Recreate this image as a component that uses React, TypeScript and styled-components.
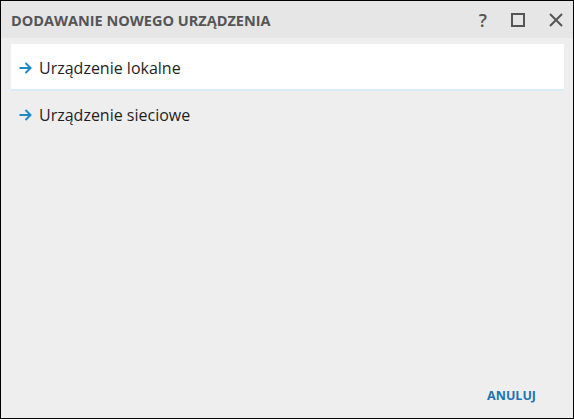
import React, { useState } from "react";
import styled, { createGlobalStyle } from "styled-components";

const Global = createGlobalStyle`
  html, body { margin: 0; padding: 0; }
  body { font-family: "Open Sans", "Noto Sans", Arial, sans-serif; background: #eeeeee; }
  * { box-sizing: border-box; }
`;

const Dialog = styled.div`
  width: 574px;
  height: 419px;
  border: 1px solid #000;
  background: #eeeeee;
  display: flex;
  flex-direction: column;
`;

const TitleBar = styled.div`
  height: 37px;
  flex: none;
  background: #e6e6e6;
  display: flex;
  align-items: center;
  padding: 0 10px 0 10px;
`;

const Title = styled.div`
  flex: 1;
  font-size: 14.5px;
  font-weight: 700;
  color: #555555;
  padding-top: 1px;
`;

const TitleButtons = styled.div`
  display: flex;
  align-items: center;
  gap: 24px;
`;

const IconButton = styled.button`
  height: 37px;
  border: none;
  background: transparent;
  padding: 0;
  display: flex;
  align-items: center;
  justify-content: center;
  color: #555555;
  font-family: "Open Sans", Arial, sans-serif;
  font-size: 18px;
  font-weight: 600;
  cursor: pointer;
`;

const Body = styled.div`
  flex: 1;
  padding: 6px 9px 0 10px;
  display: flex;
  flex-direction: column;
`;

const Item = styled.div<{ $active?: boolean }>`
  height: 47px;
  display: flex;
  align-items: center;
  padding: 3px 0 0 8px;
  gap: 7px;
  background: ${(p) => (p.$active ? "#ffffff" : "transparent")};
  border-bottom: 2px solid ${(p) => (p.$active ? "#d6edf8" : "transparent")};
  font-size: 16px;
  color: #1f1f1f;
  cursor: pointer;
`;

const Footer = styled.div`
  flex: none;
  height: 40px;
  display: flex;
  justify-content: flex-end;
  align-items: flex-start;
  padding: 9px 37px 0 0;
`;

const TextButton = styled.button`
  border: none;
  background: transparent;
  padding: 0;
  font-family: "Open Sans", Arial, sans-serif;
  font-size: 12.5px;
  font-weight: 700;
  color: #1b74b4;
  cursor: pointer;
`;

const Arrow = () => (
  <svg width="13" height="12" viewBox="0 0 13 12" fill="none">
    <path d="M0.5 6H11.5" stroke="#1e8ac4" strokeWidth="2" />
    <path d="M6.5 1L11.5 6L6.5 11" stroke="#1e8ac4" strokeWidth="2" />
  </svg>
);

const SquareIcon = () => (
  <svg width="14" height="14" viewBox="0 0 14 14" fill="none">
    <rect x="1" y="1" width="12" height="12" stroke="#555" strokeWidth="2" />
  </svg>
);

const CloseIcon = () => (
  <svg width="14" height="14" viewBox="0 0 14 14" fill="none">
    <path d="M1 1L13 13M13 1L1 13" stroke="#555" strokeWidth="2" />
  </svg>
);

export default function App() {
  const [active, setActive] = useState(0);
  const items = ["Urządzenie lokalne", "Urządzenie sieciowe"];
  return (
    <>
      <Global />
      <Dialog>
        <TitleBar>
          <Title>DODAWANIE NOWEGO URZĄDZENIA</Title>
          <TitleButtons>
            <IconButton aria-label="Pomoc">?</IconButton>
            <IconButton aria-label="Maksymalizuj">
              <SquareIcon />
            </IconButton>
            <IconButton aria-label="Zamknij">
              <CloseIcon />
            </IconButton>
          </TitleButtons>
        </TitleBar>
        <Body>
          {items.map((t, i) => (
            <Item key={t} $active={i === active} onMouseEnter={() => setActive(i)}>
              <Arrow />
              <span>{t}</span>
            </Item>
          ))}
        </Body>
        <Footer>
          <TextButton>ANULUJ</TextButton>
        </Footer>
      </Dialog>
    </>
  );
}
